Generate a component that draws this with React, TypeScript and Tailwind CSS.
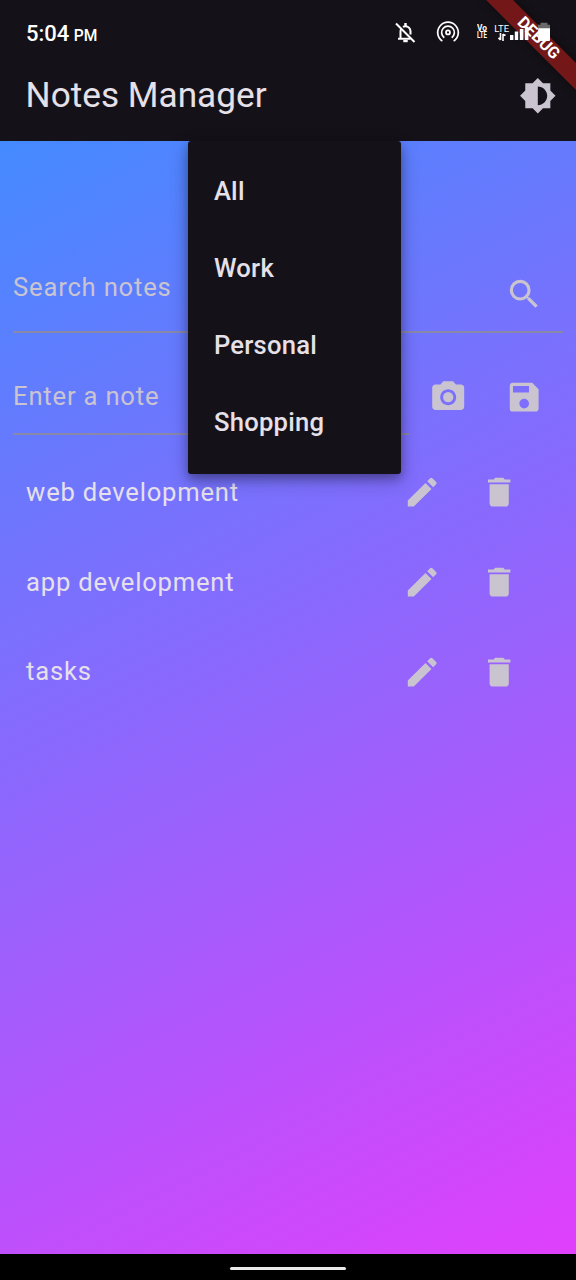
import React from 'react';
import {
  MdBrightness6,
  MdCameraAlt,
  MdDelete,
  MdEdit,
  MdSave,
  MdSearch,
} from 'react-icons/md';

const categories = ['All', 'Work', 'Personal', 'Shopping'];
const notes = ['web development', 'app development', 'tasks'];

function IconButton({ label, children }: { label: string; children: React.ReactNode }) {
  return (
    <button
      aria-label={label}
      className="flex size-[76.8px] shrink-0 items-center justify-center pr-[0.6px] pb-[0.2px] text-[38.4px] text-[#cac4d0]"
    >
      {children}
    </button>
  );
}

function DebugBanner() {
  return (
    <div className="absolute top-0 right-0 size-[110px] overflow-hidden">
      <div className="absolute top-[28.9px] left-[7.5px] flex h-[19.2px] w-[128px] rotate-45 items-center justify-center bg-[#741719] text-[16.3px] leading-none font-bold text-white shadow-[0_0_8px_rgba(0,0,0,0.5)]">
        DEBUG
      </div>
    </div>
  );
}

function StatusBar() {
  return (
    <div className="relative flex h-[51.2px] items-start justify-between pl-[26px] text-white">
      <div className="flex items-baseline gap-[4.5px] pt-[21px] leading-[26px] font-medium">
        <span className="text-[22px]">5:04</span>
        <span className="text-[15.6px]">PM</span>
      </div>
      <div className="flex h-[51.2px] w-[184px] items-start">
        <svg className="mt-[20px] ml-[1px] size-[24px]" viewBox="0 0 24 24" fill="none" stroke="white" strokeWidth="2">
          <path d="M7.5 18.5V11.5C7.5 10.5 7.8 9.5 8.3 8.8M10 6.8C13.5 5 17.5 7.5 17.5 11.5V14.5M5 18.8H17.5" />
          <path d="M12.5 3V6" strokeWidth="2.4" />
          <path d="M10.3 21H14.7" strokeWidth="2.4" />
          <path d="M3 3.5L21.5 22" />
        </svg>
        <svg className="mt-[20px] ml-[18.7px] size-[24px]" viewBox="0 0 24 24" fill="none" stroke="white" strokeWidth="1.7">
          <circle cx="12" cy="12.4" r="2" strokeWidth="1.8" />
          <path d="M8.3 17.7A6.4 6.4 0 1 1 15.7 17.7" />
          <path d="M6.3 21.1A10.3 10.3 0 1 1 17.7 21.1" />
        </svg>
        <div className="mt-[25px] ml-[17px] w-[11px] text-[8.8px] leading-[7.4px] font-bold">
          <div className="h-[7.4px] origin-left scale-x-95">Vo</div>
          <div className="h-[7.4px] w-[16px] origin-left scale-x-70">LTE</div>
        </div>
        <div className="mt-[24.5px] ml-[6px] flex w-[16px] flex-col items-center">
          <span className="text-[9.5px] leading-[8px]">LTE</span>
          <svg className="h-[8px] w-[8px]" viewBox="0 0 8 8" fill="none" stroke="white" strokeWidth="1.6">
            <path d="M2.5 0V7M.5 4.8L2.5 7M5 8V1M5 1.2L7.5 2.5" />
          </svg>
        </div>
        <svg className="mt-[26px] ml-[.5px] h-[14px] w-[19px]" viewBox="0 0 19 14" fill="white">
          <path d="M0 9h3.4v5H0zM4.8 5.5h3.4V14H4.8zM9.8 3h3.6v11H9.8zM14.8 .7h3.6V14h-3.6z" />
        </svg>
        <svg className="mt-[22px] ml-[8px] h-[20px] w-[14px]" viewBox="0 0 14 20">
          <path d="M3.5 .7h7v2H13V7H1V2.7h2.5z" fill="#69696b" />
          <path d="M1.2 6.3H13V18a1 1 0 0 1-1 1H2.2a1 1 0 0 1-1-1z" fill="white" />
        </svg>
      </div>
    </div>
  );
}

export default function App() {
  return (
    <div className="relative flex h-[1280px] w-[576px] flex-col overflow-hidden bg-black font-[Roboto,sans-serif]">
      <header className="relative h-[141px] shrink-0 bg-[#141218]">
        <DebugBanner />
        <StatusBar />
        <div className="flex h-[89.6px] items-center justify-between pl-[25.6px]">
          <h1 className="pb-[2px] text-[35.2px] leading-[44.8px] text-[#e6e0e9]">Notes Manager</h1>
          <button
            aria-label="Toggle brightness"
            className="flex size-[76.8px] items-center justify-center text-[37.6px] text-[#cac4d0]"
          >
            <MdBrightness6 />
          </button>
        </div>
      </header>

      <main className="flex flex-1 flex-col bg-[linear-gradient(152.64deg,#448aff,#e040fb)] px-[12.8px] pt-[115px] text-[25.6px] leading-[38.4px] tracking-[0.8px]">
        <div className="flex h-[76.8px] items-center justify-between border-b-2 border-[#8a88a8] text-[#cac4d0]">
          <span className="pb-[13px] pl-[0.3px]">Search notes</span>
          <div className="-mb-px">
            <IconButton label="Search">
              <MdSearch />
            </IconButton>
          </div>
        </div>

        <div className="mt-[25.6px] flex h-[76.8px]">
          <div className="flex flex-1 items-center border-b-2 border-[#8a88a8] pl-[0.3px] text-[#cac4d0]">
            Enter a note
          </div>
          <IconButton label="Take photo">
            <MdCameraAlt />
          </IconButton>
          <IconButton label="Save">
            <MdSave />
          </IconButton>
        </div>

        <ul className="mt-[12.8px] pr-[25.6px] pl-[13.3px] text-[#e6e0e9]">
          {notes.map((note) => (
            <li key={note} className="flex h-[89.6px] items-center">
              <span className="flex-1 pb-[0.6px]">{note}</span>
              <IconButton label="Edit">
                <MdEdit />
              </IconButton>
              <IconButton label="Delete">
                <MdDelete />
              </IconButton>
            </li>
          ))}
        </ul>
      </main>

      <div className="flex h-[26px] shrink-0 items-center justify-center bg-black pt-[3px]">
        <div className="h-[3.6px] w-[116px] rounded-full bg-[#ebebeb]" />
      </div>

      <div
        role="menu"
        className="absolute top-[141px] left-[188px] h-[332.5px] w-[213px] rounded-[3.2px] bg-[#141218] pt-[11.8px] text-[25.6px] leading-[32px] font-medium tracking-[0.26px] text-[#e6e0e9] shadow-[0_6px_18px_rgba(0,0,0,0.3),0_4px_8px_rgba(0,0,0,0.22)]"
      >
        {categories.map((category) => (
          <div key={category} role="menuitem" className="flex h-[76.8px] items-center px-[25.9px]">
            {category}
          </div>
        ))}
      </div>
    </div>
  );
}
